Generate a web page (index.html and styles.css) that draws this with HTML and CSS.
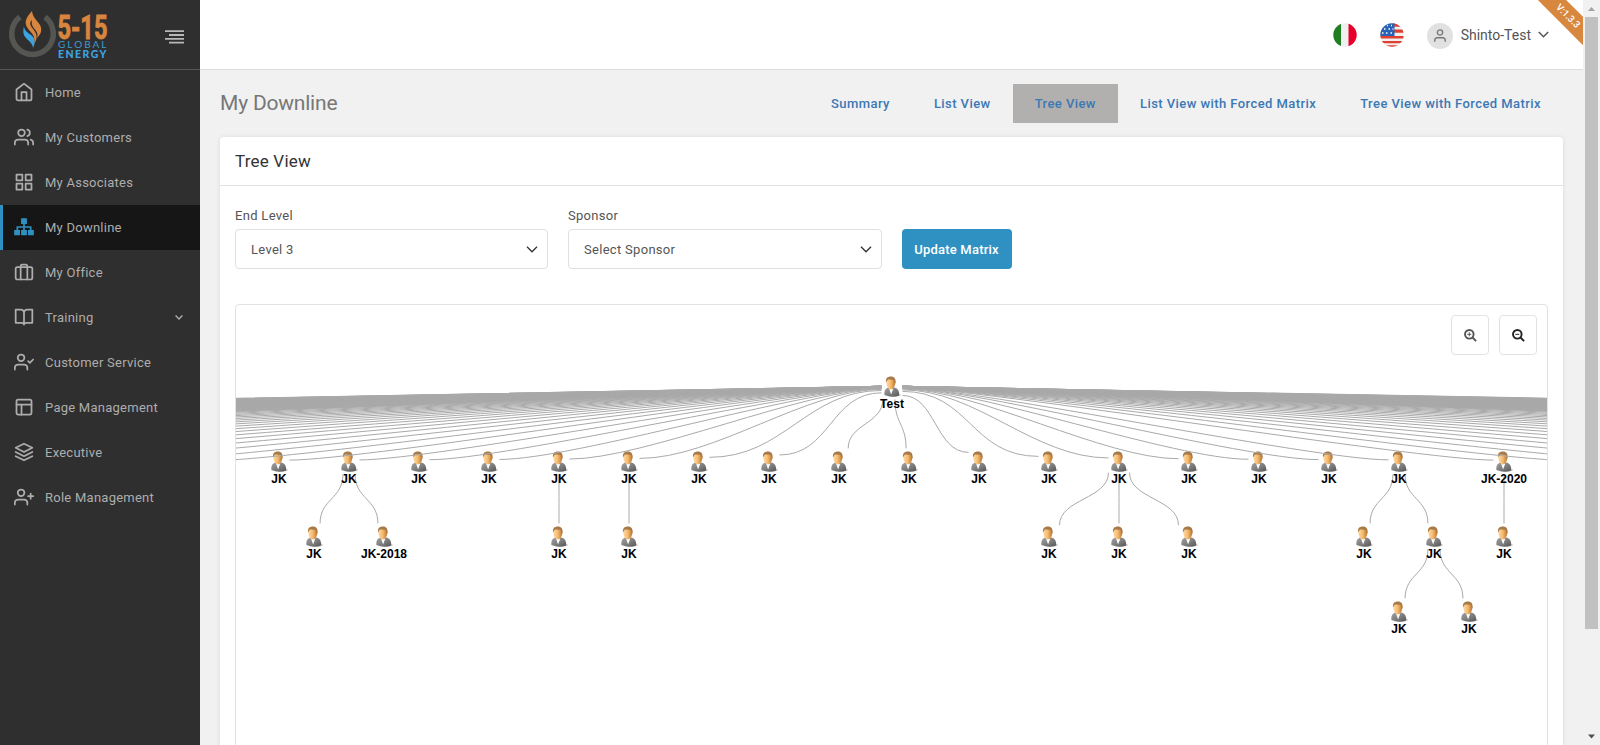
FILE: index.html
```html
<!DOCTYPE html>
<html lang="en">
<head>
<meta charset="utf-8">
<title>My Downline</title>
<link rel="stylesheet" href="styles.css">
</head>
<body>
<div class="app">
  <aside class="sidebar">
    <div class="brand">
      <svg class="logo" width="112" height="66" viewBox="0 0 112 66">
        <path class="ring" d="M20 17A20.800 20.800 0 1 0 45 17"/>
        <path class="flame-blue" d="M24 26C22.500 33 23.500 36 28 40C31 43 33 45 33 48C36 42 35 38 31 35C27 32 24 30 24 26Z"/>
        <path class="flame-orange" d="M32 11C25 19 23.500 23 29 30C33 34 35 37 34.500 43C38 38 37 34 33 29C29 24 30 22 32 20C31 25 33 27 35.500 30C37.500 33 38 35 37 38C41 34 42.500 30 40 25C37 20 33 18 32 11Z"/>
        <text class="logo-num" x="57.500" y="38.600" textLength="50" lengthAdjust="spacingAndGlyphs">5-15</text>
        <text class="logo-global" x="58" y="48.300" textLength="48.500" lengthAdjust="spacing">GLOBAL</text>
        <text class="logo-energy" x="58" y="57.700" textLength="48.500" lengthAdjust="spacing">ENERGY</text>
      </svg>
      <svg class="burger" width="20" height="14" viewBox="0 0 20 14"><path d="M0 1.200h19M4 5h15M0 8.800h19M4 12.600h15"/></svg>
    </div>
    <nav class="menu">
      <a class="item"><svg class="ico" viewBox="0 0 24 24"><path d="M3 9l9-7 9 7v11a2 2 0 0 1-2 2H5a2 2 0 0 1-2-2z"/><path d="M9 22V12h6v10"/></svg><span>Home</span></a>
      <a class="item"><svg class="ico" viewBox="0 0 24 24"><path d="M17 21v-2a4 4 0 0 0-4-4H5a4 4 0 0 0-4 4v2M23 21v-2a4 4 0 0 0-3-3.870M16 3.130a4 4 0 0 1 0 7.750"/><circle cx="9" cy="7" r="4"/></svg><span>My Customers</span></a>
      <a class="item"><svg class="ico" viewBox="0 0 24 24"><path d="M3 3h7v7H3zM14 3h7v7h-7zM14 14h7v7h-7zM3 14h7v7H3z"/></svg><span>My Associates</span></a>
      <a class="item active"><svg class="ico solid" viewBox="0 0 24 24"><path d="M8.500 1.500h7v7H13V11H21v4.500h2.800V22H16.800v-6.500H19V13h-6v2.500h2.500V22h-7v-6.500H11V13H5v2.500h2.200V22H.2v-6.500H3V11h8V8.500H8.500z"/></svg><span>My Downline</span></a>
      <a class="item"><svg class="ico" viewBox="0 0 24 24"><rect x="2" y="6" width="20" height="15" rx="2"/><path d="M8 21V5a2 2 0 0 1 2-2h4a2 2 0 0 1 2 2v16"/></svg><span>My Office</span></a>
      <a class="item"><svg class="ico" viewBox="0 0 24 24"><path d="M2 3h6a4 4 0 0 1 4 4v14a3 3 0 0 0-3-2H2zM22 3h-6a4 4 0 0 0-4 4v14a3 3 0 0 1 3-2h7z"/></svg><span>Training</span><svg class="caret" width="8" height="5" viewBox="0 0 8 5"><path d="M.6.6L4 4 7.400.6"/></svg></a>
      <a class="item"><svg class="ico" viewBox="0 0 24 24"><path d="M16 21v-2a4 4 0 0 0-4-4H5a4 4 0 0 0-4 4v2M17 11l2 2 4-4"/><circle cx="8.500" cy="7" r="4"/></svg><span>Customer Service</span></a>
      <a class="item"><svg class="ico" viewBox="0 0 24 24"><rect x="3" y="3" width="18" height="18" rx="2"/><path d="M3 9h18M9 21V9"/></svg><span>Page Management</span></a>
      <a class="item"><svg class="ico" viewBox="0 0 24 24"><path d="M12 2L2 7l10 5 10-5zM2 17l10 5 10-5M2 12l10 5 10-5"/></svg><span>Executive</span></a>
      <a class="item"><svg class="ico" viewBox="0 0 24 24"><path d="M16 21v-2a4 4 0 0 0-4-4H5a4 4 0 0 0-4 4v2M20 8v6M23 11h-6"/><circle cx="8.500" cy="7" r="4"/></svg><span>Role Management</span></a>
    </nav>
  </aside>

  <div class="content">
    <header class="topbar">
      <svg class="flag" viewBox="0 0 24 24"><clipPath id="round"><circle cx="12" cy="12" r="11.700"/></clipPath><g clip-path="url(#round)"><path fill="#f0f0f0" d="M0 0h24v24H0z"/><path fill="#1f7d22" d="M0 0h8v24H0z"/><path fill="#e8002d" d="M15.500 0H24v24h-8.500z"/></g></svg>
      <svg class="flag" viewBox="0 0 24 24"><g clip-path="url(#round)"><path fill="#f0f0f0" d="M0 0h24v24H0z"/><path fill="#e0402f" d="M13 0h11v3.700H13zM13 6.500h11v3.200H13zM0 13h24v2.600H0zM0 18h24v2.300H0zM0 22.300h24V24H0z"/><path fill="#2a63b5" d="M0 0h14.500v13H0z"/><path class="stars" d="M7 2.500h1M11 2.500h1M4 6h1.500M8.500 6H10M12.500 6h1M2 10h1.500M6 10h1.500M10.500 10H12"/></g></svg>
      <div class="user">
        <span class="avatar"><svg width="14" height="14" viewBox="0 0 24 24"><path d="M21 22v-3a4 4 0 0 0-4-4H7a4 4 0 0 0-4 4v3"/><circle cx="12" cy="6" r="4.500"/></svg></span>
        <span class="user-name">Shinto-Test</span>
        <svg class="user-caret" width="11" height="7" viewBox="0 0 11 7"><path d="M.8 1l4.700 4.700L10.200 1"/></svg>
      </div>
      <div class="ribbon">V:1.3.3</div>
    </header>

    <main class="page">
      <div class="page-head">
        <h1>My Downline</h1>
        <nav class="tabs">
          <a class="tab">Summary</a>
          <a class="tab">List View</a>
          <a class="tab current">Tree View</a>
          <a class="tab">List View with Forced Matrix</a>
          <a class="tab">Tree View with Forced Matrix</a>
        </nav>
      </div>
      <section class="card">
        <h2>Tree View</h2>
        <div class="card-body">
          <form class="filters">
            <div class="field"><label>End Level</label><div class="select"><span>Level 3</span><svg width="12" height="7" viewBox="0 0 12 7"><path d="M1 .8l5 5 5-5"/></svg></div></div>
            <div class="field"><label>Sponsor</label><div class="select"><span>Select Sponsor</span><svg width="12" height="7" viewBox="0 0 12 7"><path d="M1 .8l5 5 5-5"/></svg></div></div>
            <button type="button" class="update">Update Matrix</button>
          </form>
          <div class="board">
            <svg id="tree" class="tree" width="1311" height="480" viewBox="236 305 1311 480">
              <defs>
                <linearGradient id="suit" x1="0" y1="0" x2="1" y2="1"><stop offset="0" stop-color="#a2a2a2"/><stop offset=".6" stop-color="#787878"/><stop offset="1" stop-color="#555"/></linearGradient>
                <linearGradient id="face"><stop offset="0" stop-color="#ffd9a0"/><stop offset=".5" stop-color="#f4ba70"/><stop offset="1" stop-color="#bd762a"/></linearGradient>
                <g id="person">
                  <ellipse cx="10" cy="18.500" rx="7" ry="1.800" fill="#000" opacity=".16"/>
                  <path d="M.3 18.500C-.2 14 1.600 11.800 4.400 11L10.500 11C13.800 11.800 15.200 14.500 15.200 18.800Q8 21.500.3 18.500Z" fill="url(#suit)"/>
                  <path d="M4.800 11.500L9.200 12 7 17.800Z" fill="#fff"/>
                  <path d="M2.200 5C2.200 1.500 4 .6 6.800.6S11.200 2 11.200 5.500C11.200 10 9 13 6.600 13S2.200 9.500 2.200 5Z" fill="url(#face)"/>
                  <path d="M1.900 6C1.400 2 3.200 0 6.800 0S12 2 11.400 7.500C10.800 6 10.300 4.500 9.400 3.400Q6 2.600 4 3Q2.800 4 1.900 6Z" fill="#a87a4a"/>
                </g>
              </defs>
            </svg>
            <div class="zoom">
              <button type="button" class="zoom-btn"><svg width="13" height="13" viewBox="0 0 13 13"><circle cx="5.300" cy="5.300" r="4.300"/><path d="M8.500 8.500l3.600 3.600"/><path class="sign" d="M3.300 5.300h4M5.300 3.300v4"/></svg></button>
              <button type="button" class="zoom-btn dark"><svg width="13" height="13" viewBox="0 0 13 13"><circle cx="5.300" cy="5.300" r="4.300"/><path d="M8.500 8.500l3.600 3.600"/><path class="sign" d="M3.300 5.300h4"/></svg></button>
            </div>
          </div>
        </div>
      </section>
    </main>
  </div>

  <div class="scrollbar">
    <svg width="17" height="17" viewBox="0 0 17 17"><path fill="#a3a3a3" d="M5 11h7L8.500 7z"/></svg>
    <div class="thumb"></div>
    <svg class="down" width="17" height="17" viewBox="0 0 17 17"><path fill="#505050" d="M5 6.500h7l-3.500 4z"/></svg>
  </div>
</div>
<script src="tree.js"></script>
</body>
</html>
```
FILE: styles.css
```css
* { box-sizing: border-box; }
body { margin: 0; height: 745px; overflow: hidden; background: #f1f1f1; color: #555; font: 13px/18px Roboto, "Liberation Sans", sans-serif; letter-spacing: .3px; }
h1, h2 { margin: 0; font-weight: 400; }
svg { flex: none; display: block; }
.app { display: flex; width: 1600px; height: 745px; overflow: hidden; }

.sidebar { width: 200px; flex: none; background: #2f2f2f; }
.brand { display: flex; align-items: flex-start; height: 70px; border-bottom: 1px solid #575757; }
.logo { overflow: visible; }
.ring { fill: none; stroke: #555552; stroke-width: 5.500; }
.flame-blue { fill: #3ea4e0; }
.flame-orange { fill: #d8863f; }
.logo-num { fill: #d8863f; stroke: #d8863f; stroke-width: .9; font: 700 33px Roboto, sans-serif; letter-spacing: 0; }
.logo-global { fill: #3d9bd0; font: 400 10px Lato, sans-serif; letter-spacing: 0; }
.logo-energy { fill: #3ea4e0; font: 900 10.500px Lato, sans-serif; letter-spacing: 0; }
.burger { margin: 30px 0 0 53px; fill: none; stroke: #b8b8b8; stroke-width: 1.800; }
.item { display: flex; align-items: center; height: 45px; padding: 0 17px 0 11px; border-left: 3px solid transparent; color: #adadad; letter-spacing: .25px; }
.item span { margin-left: 11px; }
.item.active { background: #161616; border-left-color: #2e91c2; }
.ico { width: 20px; height: 20px; margin-bottom: 1px; fill: none; stroke: #adadad; stroke-width: 2.100; stroke-linecap: round; stroke-linejoin: round; }
.ico.solid { fill: #2e91c2; stroke: none; }
.caret { margin-left: auto; fill: none; stroke: #adadad; stroke-width: 1.400; }

.content { width: 1383px; flex: none; }
.topbar { position: relative; display: flex; align-items: center; justify-content: flex-end; height: 70px; padding-right: 34px; overflow: hidden; background: #fff; border-bottom: 1px solid #dcdcdc; }
.flag { width: 24px; height: 24px; margin: 1px 23px 0 0; }
.stars { fill: none; stroke: #fff; stroke-width: 1.500; }
.user { display: flex; align-items: center; font-size: 14px; letter-spacing: 0; }
.avatar { display: flex; align-items: center; justify-content: center; width: 26px; height: 26px; margin-top: 2px; border-radius: 50%; background: #e1e1e1; }
.avatar svg { fill: none; stroke: #777; stroke-width: 2.400; }
.user-name { margin: 0 7px 0 8px; }
.user-caret { fill: none; stroke: #555; stroke-width: 1.500; }
.ribbon { position: absolute; right: -34.500px; top: 5.500px; width: 100px; height: 20px; transform: rotate(45deg); background: #d8873f; color: #fff; font-size: 9.500px; font-weight: 500; line-height: 20px; text-align: center; letter-spacing: -.1px; }

.page { padding: 0 20px; }
.page-head { display: flex; align-items: center; justify-content: space-between; height: 67px; }
h1 { margin-top: -2px; color: #777; font-size: 21px; line-height: 30px; letter-spacing: -.2px; }
.tabs { display: flex; }
.tab { height: 39px; padding: 0 22px; color: #3c78b4; font-weight: 500; line-height: 39px; letter-spacing: .43px; white-space: nowrap; }
.tab.current { background: #b2b0ae; }

.card { height: 640px; background: #fff; border-radius: 4px; box-shadow: 0 0 5px rgba(0, 0, 0, .09); }
h2 { height: 49px; padding: 0 15px; border-bottom: 1px solid #e2e2e2; color: #333; font-size: 17px; line-height: 48px; letter-spacing: .2px; }
.card-body { padding: 20px 15px; }
.filters { display: flex; align-items: flex-end; gap: 20px; }
.field { width: 313.500px; }
.field:first-child { width: 313px; }
.field label { display: block; height: 23px; line-height: 20px; }
.select { display: flex; align-items: center; justify-content: space-between; height: 40px; padding: 1px 9px 0 15px; border: 1px solid #e0e0e0; border-radius: 4px; }
.select svg { fill: none; stroke: #333; stroke-width: 1.300; }
.update { width: 110px; height: 40px; padding: 0; border: 0; border-radius: 4px; background: #2e91c2; color: #fff; font: 500 13px Roboto, sans-serif; letter-spacing: .2px; }
.board { position: relative; height: 500px; margin-top: 35px; overflow: hidden; border: 1px solid #e2e2e2; border-radius: 4px 4px 0 0; }
.zoom { position: absolute; top: 10px; right: 10px; display: flex; gap: 10px; }
.zoom-btn { display: flex; align-items: center; justify-content: center; width: 38px; height: 40px; padding: 0; border: 1px solid #e2e2e2; border-radius: 4px; background: #fff; }
.zoom-btn svg { fill: none; stroke: #555; stroke-width: 1.900; }
.zoom-btn.dark svg { stroke: #222; }
.zoom-btn .sign { stroke-width: 1; }
.edge { fill: none; stroke: #a9a9a9; stroke-width: 1; }
.edge.far { stroke-width: 1.600; }
.name { fill: #000; font: 700 12px "Liberation Sans", Arial, sans-serif; letter-spacing: 0; text-anchor: middle; }

.scrollbar { display: flex; flex-direction: column; width: 17px; background: #f1f1f1; }
.thumb { width: 13px; height: 612px; margin-left: 2px; background: #c1c1c1; }
.down { margin-top: auto; }
```
FILE: tree.js
```javascript
var NS = "http://www.w3.org/2000/svg";
var svg = document.getElementById("tree");
var HALF_W = 10.5, HALF_H = 13;
var edges = document.createElementNS(NS, "g");
var icons = document.createElementNS(NS, "g");
var labels = document.createElementNS(NS, "g");

function make(parent, tag, attrs) {
  var el = document.createElementNS(NS, tag);
  for (var key in attrs) el.setAttribute(key, attrs[key]);
  parent.appendChild(el);
  return el;
}

function node(x, y, name) {
  make(icons, "use", { href: "#person", x: x - 7.9, y: y - 9.8 });
  make(labels, "text", { "class": "name", x: x, y: y + 21.6 }).textContent = name;
}

// Links leave and enter each node at its box border, square to that side.
function edge(x1, y1, x2, y2) {
  var dx = x2 - x1, dy = y2 - y1;
  var k = Math.min(HALF_W / Math.abs(dx || 1e-6), HALF_H / Math.abs(dy));
  var sideways = Math.abs(dx) > Math.abs(dy);
  var ax = x1 + dx * k, ay = y1 + dy * k, bx = x2 - dx * k, by = y2 - dy * k;
  var c, d;
  if (sideways) {
    c = Math.min(Math.abs(bx - ax) / 2, 75) * Math.sign(dx);
    d = ["C", ax + c, ay, bx - c, by, bx, by].join(" ");
  } else {
    c = (by - ay) / 2;
    d = ["C", ax, ay + c, bx, by - c, bx, by].join(" ");
  }
  make(edges, "path", { "class": Math.abs(dx) > 2000 ? "edge far" : "edge", d: "M" + ax + " " + ay + d });
}

var ROOT = { x: 892, y: 386.4 }, L1 = 461.4, L2 = 536.4, L3 = 611.4;
var i;
for (i = 1; i <= 49; i++) edge(ROOT.x, ROOT.y, 279 - 70 * i, L1);
for (i = 0; i <= 16; i++) {
  node(279 + 70 * i, L1, "JK");
  edge(ROOT.x, ROOT.y, 279 + 70 * i, L1);
}
node(1504, L1, "JK-2020");
for (i = 0; i <= 49; i++) edge(ROOT.x, ROOT.y, 1504 + 70 * i, L1);
node(ROOT.x, ROOT.y, "Test");

[
  [349, L1, 314, L2, "JK"], [349, L1, 384, L2, "JK-2018"],
  [559, L1, 559, L2, "JK"], [629, L1, 629, L2, "JK"],
  [1119, L1, 1049, L2, "JK"], [1119, L1, 1119, L2, "JK"], [1119, L1, 1189, L2, "JK"],
  [1399, L1, 1364, L2, "JK"], [1399, L1, 1434, L2, "JK"],
  [1504, L1, 1504, L2, "JK"],
  [1434, L2, 1399, L3, "JK"], [1434, L2, 1469, L3, "JK"]
].forEach(function (link) {
  edge(link[0], link[1], link[2], link[3]);
  node(link[2], link[3], link[4]);
});

svg.appendChild(icons);
svg.appendChild(edges);
svg.appendChild(labels);
```
